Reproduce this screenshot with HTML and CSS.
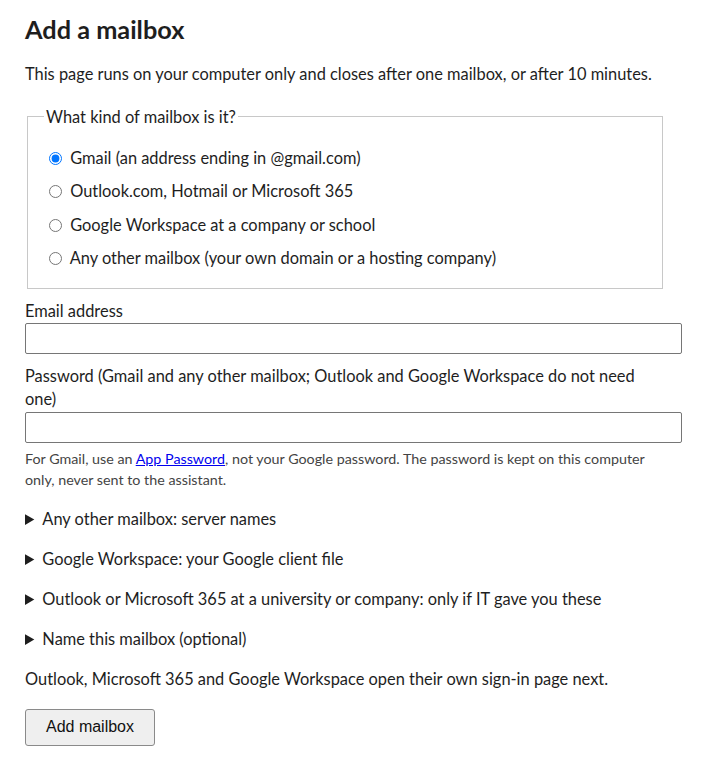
FILE: index.html
```html
<!DOCTYPE html>
<html lang="en">
<head>
  <meta charset="UTF-8" />
  <meta name="viewport" content="width=device-width, initial-scale=1.0" />
  <title>Add a mailbox</title>
  <link rel="stylesheet" href="styles.css">
</head>
<body>
  <main class="page">
    <h1>Add a mailbox</h1>
    <p>This page runs on your computer only and closes after one mailbox, or after 10 minutes.</p>

    <form class="mailbox-form" onsubmit="return false">
      <fieldset class="kind">
        <legend>What kind of mailbox is it?</legend>
        <label class="choice"><input type="radio" name="kind" value="gmail" checked> Gmail (an address ending in @gmail.com)</label>
        <label class="choice"><input type="radio" name="kind" value="outlook"> Outlook.com, Hotmail or Microsoft 365</label>
        <label class="choice"><input type="radio" name="kind" value="workspace"> Google Workspace at a company or school</label>
        <label class="choice"><input type="radio" name="kind" value="imap"> Any other mailbox (your own domain or a hosting company)</label>
      </fieldset>

      <label class="field-label" for="email">Email address</label>
      <input class="text-input" type="email" id="email" name="email">

      <label class="field-label" for="password">Password (Gmail and any other mailbox; Outlook and Google Workspace do not need one)</label>
      <input class="text-input" type="password" id="password" name="password">
      <p class="hint">For Gmail, use an <a href="#">App Password</a>, not your Google password. The password is kept on this computer only, never sent to the assistant.</p>

      <details>
        <summary>Any other mailbox: server names</summary>
      </details>
      <details>
        <summary>Google Workspace: your Google client file</summary>
      </details>
      <details>
        <summary>Outlook or Microsoft 365 at a university or company: only if IT gave you these</summary>
      </details>
      <details>
        <summary>Name this mailbox (optional)</summary>
      </details>

      <p>Outlook, Microsoft 365 and Google Workspace open their own sign-in page next.</p>

      <button type="submit" class="submit">Add mailbox</button>
    </form>
  </main>
</body>
</html>
```

FILE: styles.css
```css
body {
  margin: 0;
  font-family: Lato, "Noto Sans", sans-serif;
  font-size: 16.4px;
  line-height: 23px;
  color: #1e1e1e;
}
.page {
  width: 640px;
  padding: 15px 25px 20px;
}
h1 {
  font-size: 25.3px;
  line-height: 29px;
  margin: 0 0 18px;
}
p {
  margin: 0 0 18px;
}
.kind {
  margin: 20px 2px 0;
  padding: 13px 16px 13px;
  border: 1px solid #c8c8c8;
}
.kind legend {
  padding: 0 2px;
}
.choice {
  display: block;
  padding: 5px 0;
  line-height: 23.4px;
}
.choice input {
  margin: 0 4px 0 5px;
  vertical-align: -1px;
}
.field-label {
  display: block;
  margin-top: 10px;
  margin-bottom: 1px;
}
.field-label[for="password"] {
  margin-bottom: 2px;
}
.text-input {
  display: block;
  box-sizing: border-box;
  width: 657px;
  height: 31px;
  margin: 0;
  border: 1px solid #767676;
  border-radius: 2px;
  font: inherit;
}
.hint {
  margin: 5px 0 17px;
  font-size: 14.3px;
  line-height: 21px;
  color: #444;
}
.hint a {
  color: #0000ee;
}
details {
  margin-bottom: 17px;
}
summary {
  cursor: pointer;
}
.submit {
  font-family: "Liberation Sans", Arial, sans-serif;
  font-size: 16px;
  width: 130px;
  height: 37px;
  margin-top: 1px;
  background: #efefef;
  border: 1px solid #8a8a8a;
  border-radius: 3px;
  color: #111;
}
```
